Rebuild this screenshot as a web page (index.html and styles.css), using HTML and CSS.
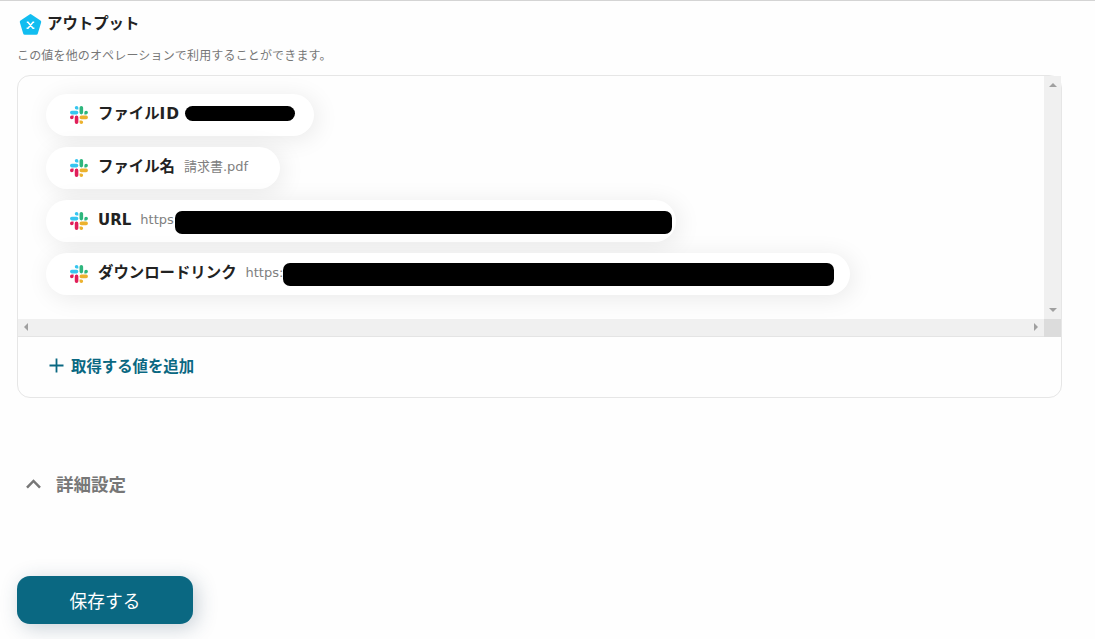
FILE: index.html
```html
<!DOCTYPE html>
<html lang="ja">
  <head>
    <meta charset="UTF-8" />
    <meta name="viewport" content="width=device-width, initial-scale=1.0" />
    <title>アウトプット</title>
    <link rel="stylesheet" href="styles.css">
  </head>
  <body>
    <svg width="0" height="0" class="sprite">
      <symbol id="slack" viewBox="0 0 54 54">
        <path fill="#36c5f0" d="M19.7 0a5.4 5.4 0 0 0 0 10.8h5.4V5.4A5.4 5.4 0 0 0 19.7 0m0 14.4H5.4a5.4 5.4 0 0 0 0 10.8h14.3a5.4 5.4 0 0 0 0-10.8" />
        <path fill="#2eb67d" d="M53.8 19.8a5.4 5.4 0 0 0-10.8 0v5.4h5.4a5.4 5.4 0 0 0 5.4-5.4m-14.4 0V5.4a5.4 5.4 0 0 0-10.8 0v14.4a5.4 5.4 0 0 0 10.8 0" />
        <path fill="#ecb22e" d="M34 54a5.4 5.4 0 0 0 0-10.8h-5.4v5.4A5.4 5.4 0 0 0 34 54m0-14.4h14.4a5.4 5.4 0 0 0 0-10.8H34a5.4 5.4 0 0 0 0 10.8" />
        <path fill="#e01e5a" d="M0 34.2a5.4 5.4 0 0 0 10.8 0v-5.4H5.4A5.4 5.4 0 0 0 0 34.2m14.3 0v14.4a5.4 5.4 0 0 0 10.8 0V34.2a5.4 5.4 0 0 0-10.8 0" />
      </symbol>
    </svg>

    <main>
      <h1 class="title">
        <svg class="title-icon" viewBox="0 0 23 23">
          <path d="M11.5 2.8L20.5 9L17.2 20H5.8L2.5 9Z" fill="#12bdf0" stroke="#12bdf0" stroke-width="3.4" stroke-linejoin="round" />
          <path d="M7.8 9.2h1.2l5 6h1.4M15.2 9.2h-1.2l-5 6H7.6" fill="none" stroke="#fff" stroke-width="1.5" />
        </svg>
        <span>アウトプット</span>
      </h1>
      <p class="description">この値を他のオペレーションで利用することができます。</p>

      <section class="output-box">
        <div class="scroll-area">
          <ul class="outputs">
            <li class="pill pill-id">
              <svg class="slack"><use href="#slack" /></svg>
              <b>ファイル<span class="wide">ID</span></b>
              <span class="mask"></span>
            </li>
            <li class="pill pill-name">
              <svg class="slack"><use href="#slack" /></svg>
              <b>ファイル名</b>
              <span class="value">請求書.pdf</span>
            </li>
            <li class="pill pill-url">
              <svg class="slack"><use href="#slack" /></svg>
              <b class="latin">URL</b>
              <span class="value">https</span>
              <span class="mask"></span>
            </li>
            <li class="pill pill-download">
              <svg class="slack"><use href="#slack" /></svg>
              <b>ダウンロードリンク</b>
              <span class="value">https:</span>
              <span class="mask"></span>
            </li>
          </ul>
          <div class="bar bar-v">
            <i class="arrow up"></i>
            <i class="arrow down"></i>
          </div>
          <div class="bar bar-h">
            <i class="arrow left"></i>
            <i class="arrow right"></i>
          </div>
          <div class="corner"></div>
        </div>
        <a class="add">
          <svg width="15" height="15" viewBox="0 0 15 15"><path d="M7.5 .5v14M.5 7.5h14" stroke="#0a6882" stroke-width="1.8" /></svg>
          <span>取得する値を追加</span>
        </a>
      </section>

      <div class="details">
        <svg width="15" height="10" viewBox="0 0 15 10"><path d="M1 8.7L7.5 2L14 8.7" fill="none" stroke="#777" stroke-width="2.5" /></svg>
        <span>詳細設定</span>
      </div>

      <button class="save">保存する</button>
    </main>
  </body>
</html>
```

FILE: styles.css
```css
* {
  box-sizing: border-box;
}

body {
  margin: 0;
  height: 639px;
  overflow: hidden;
  border-top: 1px solid #d4d4d4;
  background: #fefefe;
  color: #222;
  font-family: "DejaVu Sans", "Noto Sans CJK JP", sans-serif;
}

.sprite {
  position: absolute;
}

main {
  padding: 12px 33px 0 17px;
}

.title {
  display: flex;
  align-items: center;
  gap: 5px;
  height: 23px;
  margin: 0;
  padding-left: 2px;
  font-size: 15.4px;
  line-height: 20px;
}

.title span {
  margin-top: -1px;
}

.title-icon {
  width: 23px;
  height: 23px;
}

.description {
  margin: 10px 0 0;
  height: 20px;
  color: #777;
  font-size: 12px;
  letter-spacing: 0.16px;
  line-height: 20px;
}

.output-box {
  height: 323px;
  margin-top: 8.5px;
  border: 1px solid #e6e6e6;
  border-radius: 13px;
}

.scroll-area {
  display: grid;
  grid-template-columns: 1fr 17px;
  grid-template-rows: 243px 18px;
}

.outputs {
  display: flex;
  flex-direction: column;
  align-items: flex-start;
  gap: 11px;
  margin: 0;
  padding: 18px 28px 0;
  list-style: none;
  overflow: hidden;
  border-radius: 12px 0 0 0;
}

.pill {
  display: flex;
  align-items: center;
  height: 42px;
  padding-left: 24px;
  border-radius: 21px;
  background: #fff;
  box-shadow: 3px 3px 24px rgba(0, 0, 0, 0.085);
  white-space: nowrap;
}

.pill b {
  margin: -2px 0 0 10px;
  font-size: 15.4px;
  line-height: 22px;
}

.pill .latin {
  font-size: 15px;
}

.wide {
  letter-spacing: 0.9px;
}

.slack {
  width: 18px;
  height: 18px;
}

.value {
  margin: -1px 0 0 9px;
  color: #808080;
  font-size: 13px;
  line-height: 20px;
}

.mask {
  height: 23px;
  margin-top: 4px;
  border-radius: 7px;
  background: #000;
}

.pill-id {
  width: 268px;
}

.pill-id .mask {
  width: 110px;
  height: 15px;
  margin: -3px 0 0 5px;
  border-radius: 8px;
}

.pill-name {
  width: 234px;
}

.pill-url {
  width: 630px;
}

.pill-url .mask {
  width: 497px;
  margin-left: 1px;
}

.pill-download {
  width: 804px;
}

.pill-download .mask {
  width: 551px;
  margin-top: 2px;
}

.bar {
  display: flex;
  justify-content: space-between;
  align-items: center;
  background: #f0f0f0;
}

.bar-v {
  flex-direction: column;
  padding: 7px 0 7px;
}

.bar-h {
  padding: 0 6px;
  border-bottom: 1px solid #e4e4e4;
}

.corner {
  background: #dcdcdc;
}

.arrow {
  border: 4px solid transparent;
}

.up {
  border-top: 0;
  border-bottom-color: #a0a0a0;
}

.down {
  border-bottom: 0;
  border-top-color: #a0a0a0;
}

.left {
  border-left: 0;
  border-right-color: #a0a0a0;
}

.right {
  border-right: 0;
  border-left-color: #a0a0a0;
}

.add {
  display: flex;
  align-items: center;
  gap: 7px;
  height: 58px;
  padding-left: 31px;
  color: #0a6882;
  font-size: 15.4px;
  font-weight: bold;
}

.add span {
  margin-top: -2px;
}

.details {
  display: flex;
  align-items: center;
  gap: 15px;
  height: 26px;
  margin-top: 73px;
  padding-left: 9px;
  color: #777;
  font-size: 17.5px;
  font-weight: bold;
}

.save {
  display: block;
  width: 176px;
  height: 48px;
  margin-top: 79px;
  padding: 0;
  border: 0;
  border-radius: 13px;
  background: #0a6882;
  box-shadow: 4px 4px 20px rgba(40, 70, 100, 0.25);
  color: #fff;
  font-family: inherit;
  font-size: 17.7px;
}
```
